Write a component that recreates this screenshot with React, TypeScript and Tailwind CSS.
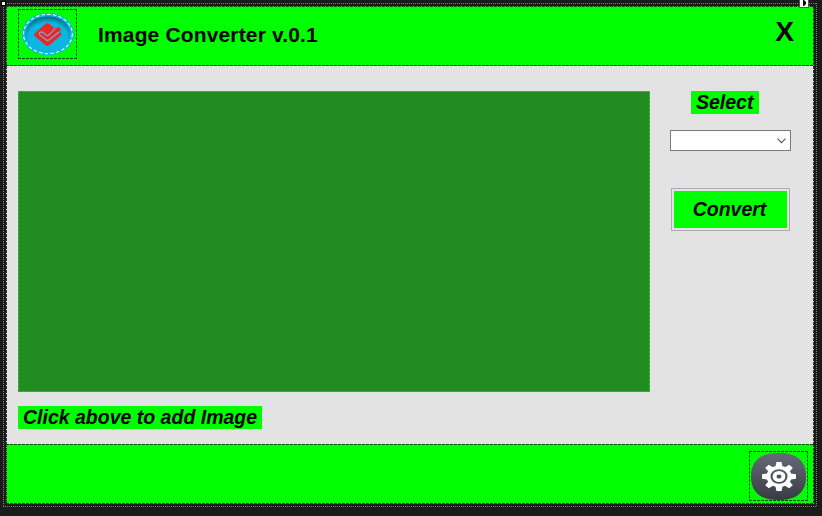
import React from "react";

function DashFrame({ className }: { className: string }) {
  const h =
    "absolute inset-x-0 h-px bg-[repeating-linear-gradient(90deg,currentColor_0_3px,transparent_3px_4px)]";
  const v =
    "absolute inset-y-0 w-px bg-[repeating-linear-gradient(180deg,currentColor_0_3px,transparent_3px_4px)]";
  return (
    <div className={`pointer-events-none absolute inset-0 ${className}`}>
      <span className={`${h} top-0`} />
      <span className={`${h} bottom-0`} />
      <span className={`${v} left-0`} />
      <span className={`${v} right-0`} />
    </div>
  );
}

function DotFrame() {
  const h =
    "absolute inset-x-0 h-px bg-[repeating-linear-gradient(90deg,#808080_0_1px,transparent_1px_2px)]";
  const v =
    "absolute inset-y-0 w-px bg-[repeating-linear-gradient(180deg,#808080_0_1px,transparent_1px_2px)]";
  return (
    <div className="pointer-events-none absolute inset-0">
      <span className={`${h} top-0`} />
      <span className={`${h} bottom-0`} />
      <span className={`${v} left-0`} />
      <span className={`${v} right-0`} />
    </div>
  );
}

function Logo() {
  return (
    <svg width="59" height="50" viewBox="0 0 59 50">
      <defs>
        <radialGradient id="shade" cx=".5" cy=".62" r=".64">
          <stop offset="0.68" stopColor="#0bb6e0" />
          <stop offset="0.85" stopColor="#0889a8" />
          <stop offset="1" stopColor="#075569" />
        </radialGradient>
      </defs>
      <ellipse cx="29.9" cy="25" rx="26" ry="21.2" fill="#0bb6e0" />
      <ellipse cx="29.9" cy="25" rx="22.4" ry="17.6" fill="url(#shade)" />
      <ellipse cx="29.9" cy="25" rx="24.4" ry="19.6" fill="none" stroke="#e6fbff" strokeWidth="1.1" strokeDasharray="3.5 2.2" />
      <path
        d="M16.6 24.4 27 15.2q2.4-1.8 4.8 0L37 19.8l2.3-1.4q1.8-.6 3 .6 1.2 1.5-.2 2.8l-1 1.2 1.8.7q1.2 1.4-.2 2.8L31.8 36q-2.3 1.7-4.6 0L16.6 26.9q-1.1-1.2 0-2.5Z"
        fill="#ed252c"
      />
      <path
        d="m41 23-9.7 7.8q-1.7 1.2-3.4 0l-5.8-4.7q-1.5-1.4 0-2.7 1.5-1 3 .1l3.2 2.6q1.2.9 2.4 0l6.3-6.3"
        fill="none"
        stroke="#6fb6c8"
        strokeWidth="1.2"
      />
    </svg>
  );
}

const teeth = [0, 45, 90, 135, 180, 225, 270, 315];

function Gear() {
  return (
    <svg width="59" height="50" viewBox="0 0 59 50">
      <defs>
        <linearGradient id="metal" x1="0" y1="0" x2="0" y2="1">
          <stop offset="0" stopColor="#676b78" />
          <stop offset="1" stopColor="#383b43" />
        </linearGradient>
      </defs>
      <path d="M29.5 2C48 2 57 10 57 25.5S48 49 29.5 49 2 41 2 25.5 11 2 29.5 2Z" fill="url(#metal)" />
      <g transform="translate(30 25.5) scale(1.17 1)" fill="#fff">
        {teeth.map((a) => (
          <path key={a} d="M-3.2-8.5-2.2-14.5H2.2L3.2-8.5Z" transform={`rotate(${a})`} />
        ))}
        <circle r="9" fill="none" stroke="#fff" strokeWidth="3.4" />
        <circle r="3.8" fill="none" stroke="#fff" strokeWidth="3.4" />
      </g>
    </svg>
  );
}

export default function App() {
  return (
    <div className="relative h-[516px] w-[822px] overflow-hidden bg-[#1b1b1c] pl-[3px] pt-[3px] font-['Liberation_Sans',Arial,sans-serif] font-bold text-black">
      <div className="relative h-[504px] w-[814px] p-[3px]">
        <DotFrame />
        <main className="relative flex h-[498px] w-[808px] flex-col bg-[#e3e3e3]">
          <DashFrame className="text-[#303030]" />
          <header className="relative flex h-[60px] shrink-0 bg-[#00ff00] pl-3 pt-[3px]">
            <DashFrame className="text-[#004b00]" />
            <div className="relative h-[50px] w-[59px]">
              <Logo />
              <DashFrame className="text-[#004b00]" />
            </div>
            <h1 className="ml-[21px] mt-[14px] whitespace-nowrap text-[21px] leading-6 tracking-[0.15px]">Image Converter v.0.1</h1>
            <button className="ml-auto mr-[20px] mt-[7px] h-8 text-[28px] leading-8">X</button>
          </header>
          <section className="flex h-[378px] shrink-0 pl-3 pt-[25px]">
            <div className="w-[632px]">
              <div className="relative h-[301px] bg-[#228b22]">
                <DashFrame className="text-[#32bd32]" />
              </div>
              <div className="mt-[14px] h-[23px] w-[244px] whitespace-nowrap bg-[#00ff00] pl-[5px] text-[19.5px] italic leading-[23px]">
                Click above to add Image
              </div>
            </div>
            <aside className="ml-5 flex w-[121px] flex-col">
              <div className="ml-[21px] h-[23px] w-[68px] bg-[#00ff00] pl-[5px] text-[19.5px] italic leading-[23px]">Select</div>
              <div className="mt-4 flex h-[21px] items-center justify-end border border-[#7a7a7a] bg-white pr-1">
                <svg width="9" height="6" viewBox="0 0 9 6" fill="none" stroke="#555" strokeWidth="1.1">
                  <path d="m.5.7 4 4 4-4" />
                </svg>
              </div>
              <div className="ml-px mt-[37px] h-[43px] w-[119px] border border-[#adadad] p-[2px]">
                <button className="block h-[37px] w-[113px] bg-[#00ff00] pr-[2px] text-[19.5px] italic leading-[37px]">Convert</button>
              </div>
            </aside>
          </section>
          <footer className="relative flex h-[60px] shrink-0 justify-end bg-[#00ff00] pr-[6px] pt-[7px]">
            <DashFrame className="text-[#004b00]" />
            <div className="relative h-[50px] w-[59px]">
              <Gear />
              <DashFrame className="text-[#004b00]" />
            </div>
          </footer>
        </main>
      </div>
      <span className="absolute left-[1px] top-[1px] size-[5px] border border-black bg-white" />
      <svg className="absolute left-[799px] top-0" width="10" height="8" viewBox="0 0 10 8">
        <path d="M0 0H10V8H0Z" fill="#555" />
        <path d="M1 0H9V7H1Z" fill="#fff" />
        <path d="M4 0H5L7 2V4L5 6H4Z" fill="#000" />
      </svg>
    </div>
  );
}
